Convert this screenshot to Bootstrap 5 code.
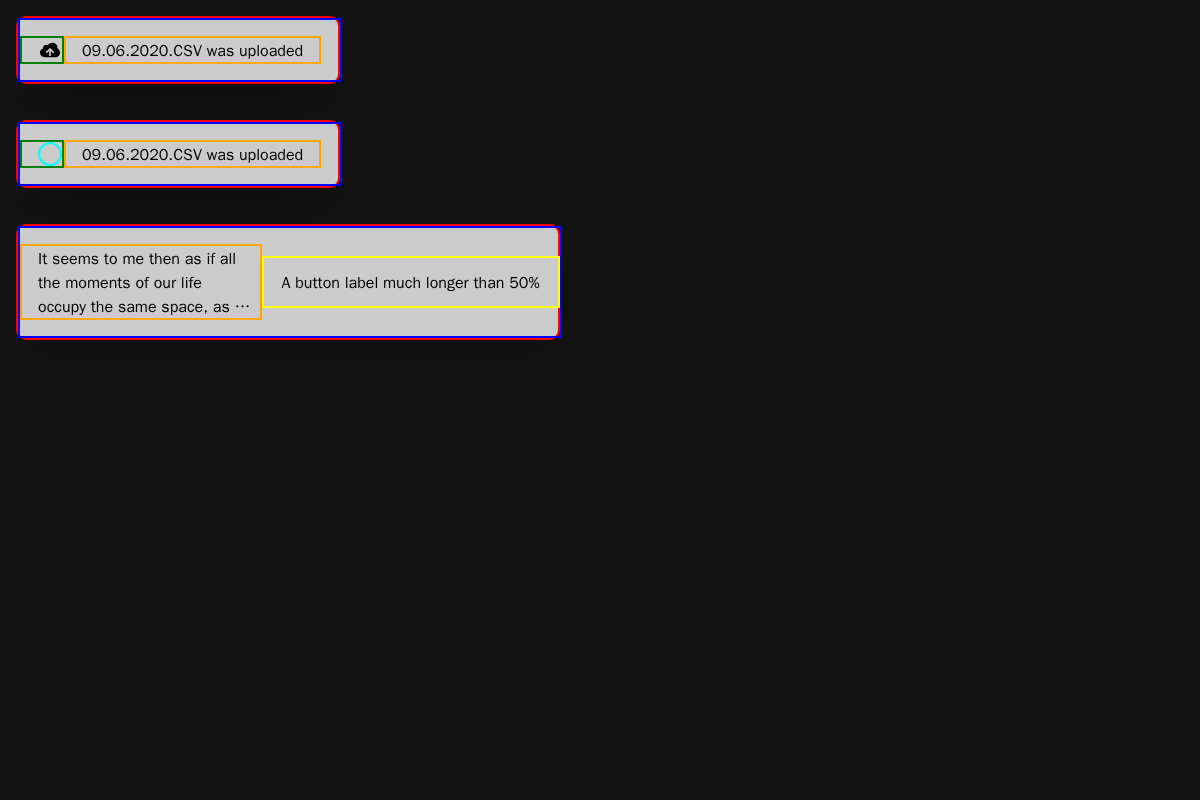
<!DOCTYPE html>
<html lang="en">
<head>
<meta charset="utf-8">
<title>Snackbars</title>
<link href="https://cdn.jsdelivr.net/npm/bootstrap@5.3.0/dist/css/bootstrap.min.css" rel="stylesheet">
<style>
body{background:#141414;color:#000;font:16px/24px "WenQuanYi Zen Hei","Liberation Sans",Arial,sans-serif}
.snack-list{gap:36px}
.snack{width:324px;background:#cbcbcb;border:2px solid red;border-radius:10px;box-shadow:0 16px 48px rgba(0,0,0,.25)}
.snack-wide{width:544px}
.snack-body{flex:none;width:324px;min-height:64px;border:2px solid blue}
.snack-wide .snack-body{width:544px;height:112px}
.snack-icon{width:44px;height:28px;border:2px solid green}
.snack-icon svg{flex:none}
.snack-label{width:257px;height:28px;padding-top:1px;border:2px solid orange;white-space:nowrap}
.snack-wide .snack-label{width:242px;height:76px}
.snack-action{width:298px;height:52px;padding:2px 17px 0 16px;border:2px solid #ff0;white-space:nowrap}
.ring{flex:none;width:24px;height:24px;border:2px solid cyan;border-radius:50%}
</style>
</head>
<body class="p-3 min-vh-100">
<main class="snack-list d-flex flex-column align-items-start">
<div class="snack d-flex"><div class="snack-body d-flex align-items-center">
<div class="snack-icon d-flex ps-3"><svg width="24" height="24" viewBox="0 0 24 24"><path d="M19.3 10.300C19.800 7.200 17.600 4.800 14.400 4.800c-2.100 0-3.700 1-4.600 2.500C7.500 6 4.900 7.700 5 10.500 3.100 11.100 2 12.700 2 14.600 2 17.200 4.200 19.300 6.900 19.300H17.400c2.600 0 4.600-2.100 4.600-4.600 0-2.100-1-3.800-2.700-4.400Z"/><path d="M12 18V11.500M8.200 14.700 12 11.200 15.800 14.700" fill="none" stroke="#cbcbcb" stroke-width="1.7"/></svg></div>
<div class="snack-label px-3">09.06.2020.CSV was uploaded</div></div></div>
<div class="snack d-flex"><div class="snack-body d-flex align-items-center">
<div class="snack-icon d-flex ps-3"><span class="ring"></span></div>
<div class="snack-label px-3">09.06.2020.CSV was uploaded</div></div></div>
<div class="snack snack-wide d-flex"><div class="snack-body d-flex align-items-center">
<div class="snack-label px-3">It seems to me then as if all<br>the moments of our life<br>occupy the same space, as …</div>
<div class="snack-action d-flex align-items-center justify-content-center">A button label much longer than 50%</div></div></div>
</main>
<script src="https://cdn.jsdelivr.net/npm/bootstrap@5.3.0/dist/js/bootstrap.bundle.min.js"></script>
</body>
</html>
